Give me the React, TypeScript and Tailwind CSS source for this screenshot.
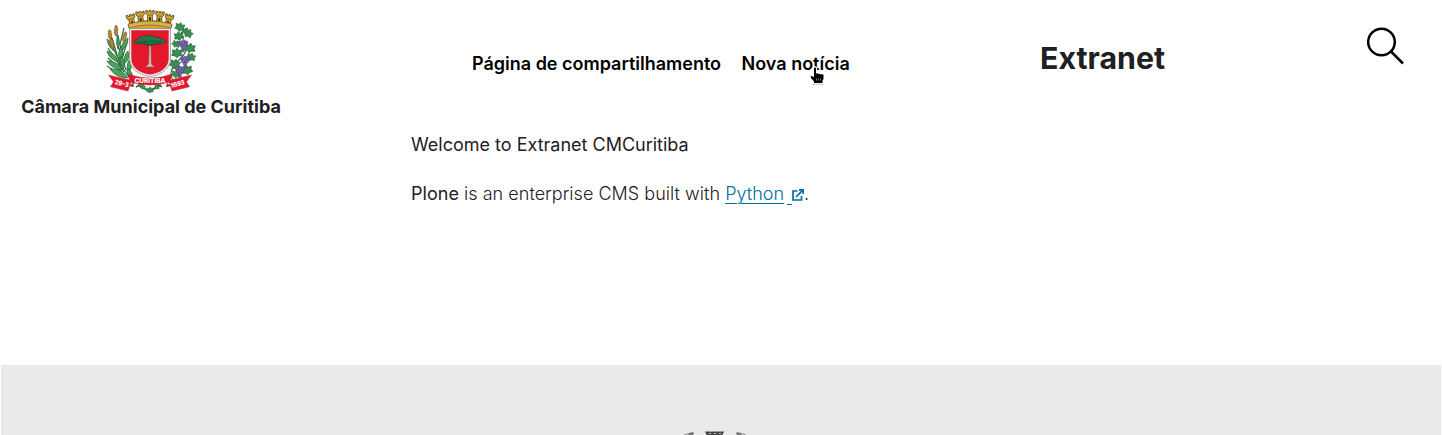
import React from "react";

const Tower = ({ x, y, r }: { x: number; y: number; r: number }) => (
  <g transform={`translate(${x} ${y}) rotate(${r})`}>
    <path
      d="M-4.2-6v3.200l1.700 1.600V5h5v-6.200l1.700-1.600V-6H2.600v1.400H1V-6h-2v1.400h-1.600V-6z"
      fill="#d3a536"
      stroke="#4d3d18"
      strokeWidth=".7"
    />
    <path d="M-2.4-1.4h4.800" stroke="#5b4514" strokeWidth=".6" />
    <path d="M-1 4V1.400a1 1 0 0 1 2 0V4z" fill="#3d300f" />
  </g>
);

const Leaf = ({ x, y, s = 1, r = 0 }: { x: number; y: number; s?: number; r?: number }) => (
  <path
    transform={`translate(${x} ${y}) rotate(${r}) scale(${s})`}
    d="M0-4 1.500-2 4-2.600 3.400 0 4.400 2 1.600 2.400 0 4-1.600 2.400-4.400 2-3.400 0-4-2.600-1.500-2z"
    fill="#3a8f50"
    stroke="#24603a"
    strokeWidth=".6"
  />
);

const Grapes = ({ x, y }: { x: number; y: number }) => (
  <g transform={`translate(${x} ${y})`} fill="#7468a6" stroke="#453c72" strokeWidth=".5">
    <circle cx="-3.200" cy="-3.400" r="1.800" />
    <circle cx="0" cy="-4" r="1.800" />
    <circle cx="3.200" cy="-3.400" r="1.800" />
    <circle cx="-1.800" cy="-.8" r="1.800" />
    <circle cx="1.800" cy="-.8" r="1.800" />
    <circle cx="0" cy="1.800" r="1.800" />
    <circle cx="0" cy="4.600" r="1.500" />
  </g>
);

const Wheat = ({ x, y, r }: { x: number; y: number; r: number }) => (
  <g transform={`translate(${x} ${y}) rotate(${r})`}>
    <path
      d="M0-5.500 1.600-3.600 1.200-2.600 2-1 1.400 0 1.800 2 0 5-1.800 2-1.400 0-2-1-1.200-2.600-1.600-3.600z"
      fill="#b98332"
      stroke="#7a5a22"
      strokeWidth=".6"
    />
  </g>
);

function Crest() {
  return (
    <svg width="90" height="84" viewBox="6 6 90 84" className="block">
      <g fill="none" stroke="#2d6b3b" strokeWidth="1.200">
        <path d="M10 28 14 46 24 66 34 80M16 21 18 42 26 66M24 24 20 40 22 56M8 54q10 8 18 20" />
        <path d="M7 62l16 10M12 34l9 30M27 38l-7 24M8 44l16 24" />
      </g>
      <g fill="#4aa35b" stroke="#245f35" strokeWidth=".7">
        <path d="M14 47Q8 43 7 35q6 4 7 12zM18 45q-3-6 0-14 3 8 0 14zM21 47q0-9 7-13 0 9-7 13z" />
        <path d="M18 58Q9 55 7 47q9 2 11 11zM20 56q-3-7 1-14 4 8-1 14zM24 60q-1-8 4-13 3 8-4 13z" />
        <path d="M22 66Q12 65 7 57q11 0 15 9zM23 65q-4-6-2-13 5 5 2 13zM28 69q-2-8 1-13 5 7-1 13z" />
        <path d="M28 74q-12 0-18-9 12-1 18 9zM32 76q-6-5-5-12 7 4 5 12z" />
      </g>
      <Wheat x={10} y={31} r={-5} />
      <Wheat x={16} y={27} r={3} />
      <Wheat x={24.5} y={33} r={15} />
      <Wheat x={12} y={40} r={-12} />

      <path d="M88 24Q77 27 84 36T79 56t-6 20" fill="none" stroke="#2d6b3b" strokeWidth="1.100" />
      <Leaf x={80} y={23} s={1.1} r={12} />
      <Leaf x={88} y={29} s={1.1} r={40} />
      <Leaf x={79} y={32} s={1.1} r={-10} />
      <Leaf x={90} y={44} s={1.2} r={10} />
      <Leaf x={76} y={40} s={0.9} r={30} />
      <Leaf x={77} y={49} s={1.2} r={0} />
      <Leaf x={91} y={53} s={1} r={20} />
      <Leaf x={75} y={60} s={1.2} r={15} />
      <Leaf x={87} y={66} s={1.2} r={-10} />
      <Leaf x={76} y={70} s={1} r={10} />
      <Grapes x={83} y={42} />
      <Grapes x={85} y={58} />
      <Grapes x={80} y={68} />

      <path
        d="M30 20q20-7 40 0l2 1-2 5H30l-2-5z"
        fill="#d3a536"
        stroke="#4d3c13"
        strokeWidth=".7"
      />
      <Tower x={31.5} y={16.5} r={-14} />
      <Tower x={68.5} y={16.5} r={14} />
      <Tower x={40.5} y={13.5} r={-6} />
      <Tower x={59.5} y={13.5} r={6} />
      <Tower x={50} y={12.5} r={0} />
      <path d="M28 20q22-6 44 0l-1 4q-21-6-42 0z" fill="#dcb04a" stroke="#6b5420" strokeWidth=".6" />

      <path
        d="M29.500 24.500h41V54c0 10-8 17-20.500 18.500C37.500 71 29.500 64 29.500 54z"
        fill="#e9e9e9"
        stroke="#888"
        strokeWidth=".7"
      />
      <path
        d="M31.300 26.300h37.400V54c0 9-7 15-18.700 16.500C38.300 69 31.300 63 31.300 54z"
        fill="#e3182d"
      />
      <path d="m49.200 40-.6 20-3.200 3h9.200l-3.200-3-.4-20z" fill="#d9b9b3" stroke="#71443c" strokeWidth=".5" />
      <path
        d="M34 38q1-3 4-3 2-3 5-2.500 3-1 7-1t6 2q4-1 5 1.500 4 0 5 3-2 2.500-6 1.500-3 1-6 .5l-3 1h-3l-3-1q-3 .5-5-.5-4 1-6-1.500z"
        fill="#28794a"
        stroke="#173e25"
        strokeWidth=".6"
      />
      <path d="m38 37 12 5 11-4M43 35l7 6 7-5M36 38l27-1" fill="none" stroke="#154728" strokeWidth=".6" />
      <path d="M36 83q8-5 13-3 6-2 13 3M38 81l9 5M61 81l-9 5" fill="none" stroke="#2d6b3b" strokeWidth="1.500" />
      <Leaf x={50} y={86} s={0.8} />
      <Leaf x={43} y={83} s={0.6} r={20} />
      <Leaf x={57} y={83} s={0.6} r={20} />
      <path d="M33 79l-4 3 5 1zM67 79l4 3-5 1z" fill="#9b2630" />
      <g fill="#e3182d" stroke="#b02b38" strokeWidth=".5">
        <path d="m8.500 71 23 5.500-3.500 10.500-17.500-4.200 3-5z" />
        <path d="m91.500 71-23 5.500 3.500 10.500 17.500-4.200-3-5z" />
        <path d="M28 70q22 8 44 0l-2 8q-20 6-40 0z" />
      </g>
      <g fill="#fff" fontFamily="Inter, sans-serif" fontSize="6.500" fontWeight="800">
        <text x="14.500" y="80" transform="rotate(14 14.500 80)" textLength="14" lengthAdjust="spacingAndGlyphs">29-3</text>
        <text x="34.500" y="79.300" textLength="31" fontSize="6" lengthAdjust="spacingAndGlyphs">CURITIBA</text>
        <text x="71.500" y="84" transform="rotate(-15 71.500 84)" textLength="14" lengthAdjust="spacingAndGlyphs">1693</text>
      </g>
    </svg>
  );
}

function HandCursor() {
  return (
    <svg width="16" height="19" viewBox="-1 -1 16 19" className="absolute left-[67px] top-[14px]">
      <path
        d="M4 1.500Q4 .5 5 .5t1 1V6.500l1.500-.3.700.8 1.800-.3.800.8 1.700-.2q1 0 1 1V12l-1 1.500V16H4v-1.500L1 11Q0 9.200 1.500 9L4 10z"
        stroke="#fff"
        strokeWidth="2.400"
        paintOrder="stroke"
        strokeLinejoin="round"
      />
      <path d="M6.500 11.500v2M8.500 11.500v2M10.500 11.500v2" stroke="#aaa" strokeWidth=".7" />
      <path d="M3 17.300h10.500" stroke="#aaa" strokeWidth=".7" />
    </svg>
  );
}

function FooterCrest() {
  return (
    <svg width="66" height="5" viewBox="0 0 66 5" className="mt-[65px]">
      <g fill="#777">
        <path d="M2 4.500 7 3 11 2 12 3.500 11 5H7L6 4.200 3 5zM64 4.500 59 3 55 2 54 3.500 55 5h4l1-.8 3 .8z" />
        <path d="M23 1.500h19l-1.500 3.500h-16z" fill="#444" />
      </g>
      <path d="M29 1v1M36 1v1M27 3.500h2M32 3.500h2M37 3.500h2" stroke="#bbb" />
    </svg>
  );
}

export default function App() {
  return (
    <div className="flex h-[435px] flex-col overflow-hidden bg-white font-['Inter',sans-serif] text-[18px] text-[#1f2022]">
      <header className="flex h-[130px] items-start">
        <a className="flex w-[302px] flex-col items-center pt-[10px]">
          <Crest />
          <span className="whitespace-nowrap text-[18px] font-bold leading-[26px]">Câmara Municipal de Curitiba</span>
        </a>
        <nav className="ml-[170px] flex w-[568px] gap-[20.5px] whitespace-nowrap pt-[52px] font-semibold leading-6 text-black">
          <a>Página de compartilhamento</a>
          <a className="relative">
            Nova notícia
            <HandCursor />
          </a>
        </nav>
        <h1 className="w-[326px] pt-[38px] text-[30.3px] font-bold leading-10">Extranet</h1>
        <button aria-label="Buscar" className="ml-px mt-[27px]">
          <svg width="38" height="38" viewBox="0 0 38 38" fill="none" stroke="#000" strokeWidth="2.500">
            <circle cx="14.500" cy="15" r="13.300" />
            <path d="m24 24.500 12 12" />
          </svg>
        </button>
      </header>
      <main className="flex h-[235px] flex-col gap-[25px] pl-[411px] pt-[3px] leading-6">
        <p>Welcome to Extranet CMCuritiba</p>
        <p className="font-light tracking-[0.03px]">
          <span className="font-normal">Plone</span> is an enterprise CMS built with{" "}
          <a className="text-[#0070a2]">
            <span className="underline decoration-1 underline-offset-[3px]">Python</span>
            <span className="ml-[3px] inline-block h-[21px] w-[5px] border-b border-[#0070a2] align-[-5px]" />
            <svg width="12" height="12" viewBox="0 0 12 12" fill="none" stroke="currentColor" strokeWidth="1.700" className="inline align-[-1px]">
              <path d="M5.500 2H1v9h8.500V7M4 8l6.800-6.800M7 .9h4.200V5" />
            </svg>
          </a>
          .
        </p>
      </main>
      <footer className="mx-px flex h-[70px] justify-center bg-[#eaeaea] pr-[12px]">
        <FooterCrest />
      </footer>
    </div>
  );
}
